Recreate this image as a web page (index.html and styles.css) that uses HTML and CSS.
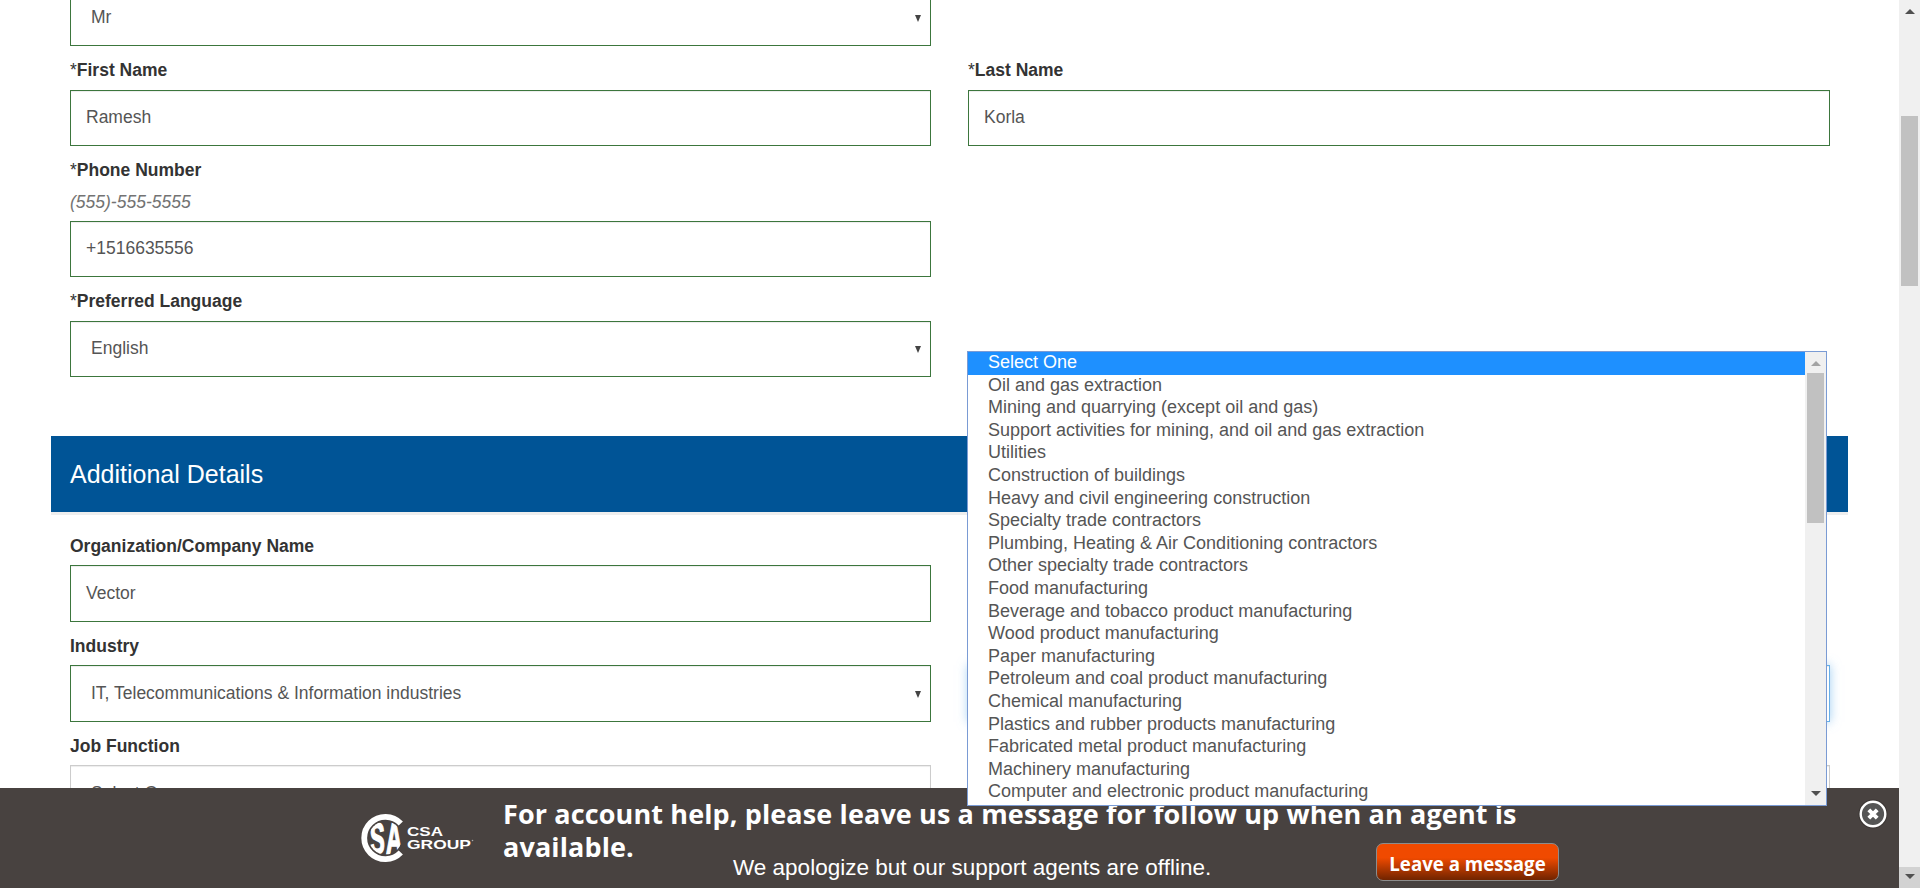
FILE: index.html
```html
<!DOCTYPE html>
<html lang="en">
<head>
<meta charset="utf-8">
<title>Account Profile</title>
<link rel="stylesheet" href="styles.css">
</head>
<body>
<div class="window">
  <main class="page">
    <form class="form">
      <div class="row row-first">
        <div class="field"><div class="control select valid"><span>Mr</span><i class="caret"></i></div></div>
      </div>
      <div class="row">
        <div class="field"><label><span class="req">*</span>First Name</label><div class="control valid"><span>Ramesh</span></div></div>
        <div class="field"><label><span class="req">*</span>Last Name</label><div class="control valid"><span>Korla</span></div></div>
      </div>
      <div class="row">
        <div class="field"><label><span class="req">*</span>Phone Number</label><em class="hint">(555)-555-5555</em><div class="control valid"><span>+1516635556</span></div></div>
      </div>
      <div class="row">
        <div class="field"><label><span class="req">*</span>Preferred Language</label><div class="control select valid"><span>English</span><i class="caret"></i></div></div>
      </div>
      <h2 class="section-title">Additional Details</h2>
      <div class="row row-tall row-org">
        <div class="field"><label>Organization/Company Name</label><div class="control valid"><span>Vector</span></div></div>
      </div>
      <div class="row row-tall">
        <div class="field"><label>Industry</label><div class="control select valid"><span>IT, Telecommunications &amp; Information industries</span><i class="caret"></i></div></div>
        <div class="field"><label>&nbsp;</label><div class="control select focused"></div></div>
      </div>
      <div class="row row-tall">
        <div class="field"><label>Job Function</label><div class="control select"><span>Select One</span><i class="caret"></i></div></div>
        <div class="field"><label>&nbsp;</label><div class="control select"></div></div>
      </div>
    </form>

    <footer class="chatbar">
      <svg class="logo" width="114" height="50" viewBox="0 0 114 50">
        <defs><clipPath id="disc"><circle cx="24.400" cy="25" r="16.600"/></clipPath></defs>
        <path d="M39.800 10.400A21.200 21.200 0 1 0 39.800 39.600" fill="none" stroke="#fff" stroke-width="5.800"/>
        <g clip-path="url(#disc)" class="logo-mark">
          <text transform="translate(8.800 41) scale(.5 1)">S</text>
          <text transform="translate(24.900 41) scale(.5 1)">A</text>
        </g>
        <g class="logo-name">
          <text x="46" y="23" textLength="36" lengthAdjust="spacingAndGlyphs">CSA</text>
          <text x="46" y="36" textLength="64" lengthAdjust="spacingAndGlyphs">GROUP</text>
        </g>
        <circle cx="111.500" cy="27.500" r=".8" fill="#aaa"/>
      </svg>
      <div class="chat-text">
        <h3>For account help, please leave us a message for follow up when an agent is<br>available.</h3>
      </div>
      <p class="chat-note">We apologize but our support agents are offline.</p>
      <button class="chat-button" type="button">Leave a message</button>
      <svg class="chat-close" width="32" height="32" viewBox="0 0 32 32">
        <circle cx="16" cy="16" r="14.500" fill="#3a3533"/>
        <circle cx="16" cy="16" r="12.300" fill="#555" stroke="#fff" stroke-width="2.400"/>
        <path d="M11.800 11.800l8.400 8.400M20.200 11.800l-8.400 8.400" stroke="#fff" stroke-width="4"/>
      </svg>
    </footer>

    <div class="dropdown">
      <ul class="options">
        <li class="active">Select One</li>
        <li>Oil and gas extraction</li>
        <li>Mining and quarrying (except oil and gas)</li>
        <li>Support activities for mining, and oil and gas extraction</li>
        <li>Utilities</li>
        <li>Construction of buildings</li>
        <li>Heavy and civil engineering construction</li>
        <li>Specialty trade contractors</li>
        <li>Plumbing, Heating &amp; Air Conditioning contractors</li>
        <li>Other specialty trade contractors</li>
        <li>Food manufacturing</li>
        <li>Beverage and tobacco product manufacturing</li>
        <li>Wood product manufacturing</li>
        <li>Paper manufacturing</li>
        <li>Petroleum and coal product manufacturing</li>
        <li>Chemical manufacturing</li>
        <li>Plastics and rubber products manufacturing</li>
        <li>Fabricated metal product manufacturing</li>
        <li>Machinery manufacturing</li>
        <li>Computer and electronic product manufacturing</li>
      </ul>
      <div class="scrollbar list-scroll">
        <i class="arrow up muted"></i>
        <i class="thumb"></i>
        <i class="arrow down"></i>
      </div>
    </div>
  </main>
  <div class="scrollbar page-scroll">
    <i class="arrow up"></i>
    <i class="thumb"></i>
    <i class="arrow down shaded"></i>
  </div>
</div>
</body>
</html>
```
FILE: styles.css
```css
* { box-sizing: border-box; }

body {
  margin: 0;
  font-family: Arial, "Liberation Sans", sans-serif;
  font-size: 17.5px;
  color: #333;
  background: #fff;
}

.window {
  display: flex;
  height: 888px;
  overflow: hidden;
}

.page {
  position: relative;
  flex: 1;
  height: 888px;
  overflow: hidden;
}

/* form */
.form { padding: 0 51px; }

.row {
  display: grid;
  grid-template-columns: 861px 862px;
  column-gap: 37px;
  padding: 0 19px;
}

.row-first { margin-top: -10px; }
.row-org { padding-top: 7px; }

label {
  display: block;
  margin: 12px 0 7px;
  line-height: 25px;
  font-weight: bold;
}

.req { font-weight: normal; }

.hint {
  display: block;
  margin-bottom: 7px;
  line-height: 24px;
  color: #737373;
}

.control {
  display: flex;
  align-items: center;
  justify-content: space-between;
  height: 56px;
  padding: 0 9px 2px 15px;
  border: 1px solid #ccc;
  color: #555;
  background: #fff;
  box-shadow: inset 0 1px 1px rgba(0, 0, 0, .075);
}

.row-tall .control { height: 57px; padding-bottom: 1px; }
.row-tall label { margin-bottom: 6px; }

.control.select { padding-left: 20px; }
.valid { border-color: #3c763d; }

.focused {
  border-color: #66afe9;
  box-shadow: inset 0 1px 1px rgba(0, 0, 0, .075), 0 0 10px rgba(102, 175, 233, .6);
}

.caret {
  margin-top: 2px;
  border: 3.5px solid transparent;
  border-top: 7px solid #444;
  border-bottom: 0;
}

.section-title {
  height: 79px;
  margin: 59px 0 0;
  padding-left: 19px;
  border-bottom: 3px solid #eee;
  font-size: 25px;
  font-weight: normal;
  line-height: 76px;
  color: #fff;
  background: #005496;
}

/* support bar pinned over the page bottom */
.chatbar {
  position: absolute;
  left: 0;
  right: 0;
  bottom: 0;
  height: 100px;
  display: grid;
  grid-template-columns: 361px 142px 230px 643px 183px 298px 32px;
  grid-template-rows: 51px 49px;
  color: #fff;
  background: #484240;
}

.logo {
  grid-area: 1 / 2 / 3 / 3;
  margin-top: 25px;
}

.logo-mark {
  font: bold 45px "Liberation Sans", sans-serif;
  fill: #fff;
  stroke: #fff;
  stroke-width: 1.6px;
}

.logo-name { font: bold 13px "Liberation Sans", sans-serif; fill: #fff; }

.chat-text {
  grid-area: 1 / 3 / 3 / 6;
  padding-top: 9px;
}

.chat-text h3 {
  margin: 0;
  font-family: "Trebuchet MS", "Open Sans", sans-serif;
  font-size: 27px;
  font-weight: bold;
  line-height: 33px;
  letter-spacing: .12px;
  white-space: nowrap;
}

.chat-note {
  grid-area: 2 / 4;
  margin: 15px 0 0;
  font-size: 22.5px;
  line-height: 28px;
  white-space: nowrap;
}

.chat-button {
  grid-area: 2 / 5;
  height: 38px;
  margin-top: 4px;
  padding: 3px 0 0;
  border: 1px solid #8c8c8c;
  border-radius: 7px;
  font-family: "Trebuchet MS", "Open Sans", sans-serif;
  font-size: 18.7px;
  font-weight: bold;
  color: #fff;
  white-space: nowrap;
  background: linear-gradient(#f04a00 38%, #702400);
}

.chat-close {
  grid-area: 1 / 7;
  margin-top: 10px;
}

/* open option list */
.dropdown {
  position: absolute;
  left: 967px;
  top: 351px;
  display: flex;
  width: 860px;
  height: 455px;
  border: 1px solid #7a9bd4;
  background: #fff;
}

.options {
  flex: 1;
  margin: 0;
  padding: 0;
  list-style: none;
  font-size: 18px;
  color: #555;
}

.options li {
  height: 22.6px;
  padding-left: 20px;
  line-height: 20px;
  white-space: nowrap;
}

.options .active {
  color: #fff;
  background: #1e90ff;
}

/* scrollbars */
.scrollbar {
  display: flex;
  flex-direction: column;
  align-items: center;
  width: 21px;
  background: #f0f0f0;
}

.arrow {
  display: flex;
  align-items: center;
  justify-content: center;
  width: 21px;
  height: 21px;
}

.arrow::before {
  content: "";
  border: 5px solid transparent;
}

.up::before { margin-top: 2px; border-top: 0; border-bottom: 5px solid #505050; }
.down::before { margin-bottom: 2px; border-bottom: 0; border-top: 5px solid #505050; }
.muted::before { border-bottom-color: #a3a3a3; }
.down { margin-top: auto; }
.shaded { background: #d2d2d2; }

.thumb {
  width: 17px;
  background: #c1c1c1;
}

.page-scroll .thumb { height: 170px; margin-top: 95px; }
.list-scroll .thumb { height: 150px; }
```
